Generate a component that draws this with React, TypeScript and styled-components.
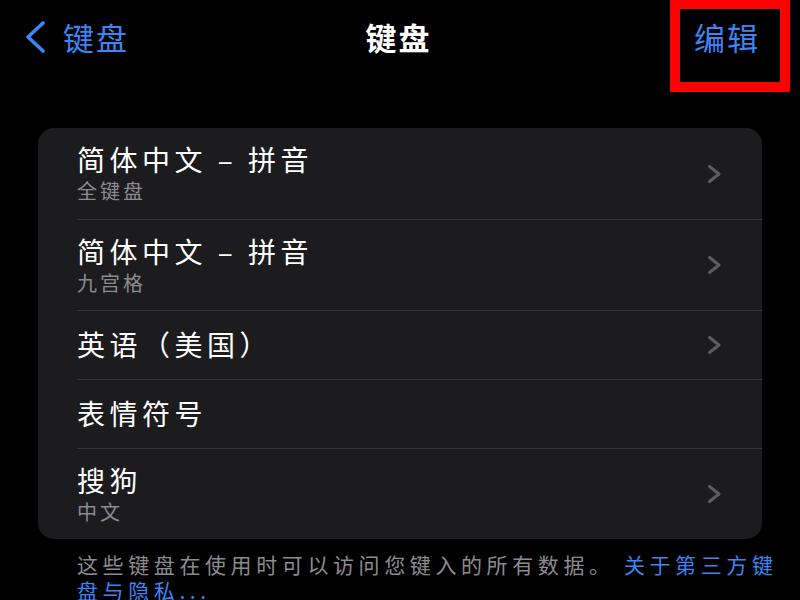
import React from "react";
import styled, { createGlobalStyle } from "styled-components";

const Blue = "#3b86f4";
const CardColor = "#1c1c1e";
const LineColor = "#38383a";
const SubColor = "#8b8b90";
const ChevronColor = "#5d5d61";

const GlobalStyle = createGlobalStyle`
  body {
    margin: 0;
    background: #000;
    font-family: "Noto Sans CJK SC", "Noto Sans", sans-serif;
  }
`;

const Screen = styled.div`
  position: relative;
  width: 800px;
  height: 600px;
  overflow: hidden;
  background: #000;
`;

const NavBar = styled.div`
  display: grid;
  grid-template-columns: 1fr auto 1fr;
  align-items: center;
  height: 74px;
  padding: 0 27px 0 24px;
`;

const NavText = styled.div`
  font-size: 31px;
  letter-spacing: 2px;
  line-height: 36px;
`;

const BackButton = styled(NavText)`
  display: flex;
  align-items: center;
  gap: 17px;
  color: ${Blue};
`;

const NavTitle = styled(NavText)`
  color: #fff;
  font-weight: 700;
`;

const EditButton = styled(NavText)`
  justify-self: end;
  margin-right: 13px;
  color: ${Blue};
`;

const Highlight = styled.div`
  position: absolute;
  left: 670px;
  top: -1px;
  width: 100px;
  height: 73px;
  border: 10px solid #ff0000;
`;

const Card = styled.div`
  margin: 54px 38px 0;
  background: ${CardColor};
  border-radius: 16px;
  overflow: hidden;
`;

const Row = styled.div<{ $tall?: boolean }>`
  display: flex;
  align-items: center;
  justify-content: space-between;
  margin-left: 39px;
  padding-right: 40px;
  height: ${(p) => (p.$tall ? "91px" : "69px")};
  box-sizing: border-box;

  & + & {
    border-top: 1px solid ${LineColor};
  }
`;

const RowText = styled.div`
  display: flex;
  flex-direction: column;
  padding-bottom: 2px;
`;

const RowTitle = styled.span`
  color: #fff;
  font-size: 28px;
  letter-spacing: 4.5px;
  line-height: 34px;
`;

const RowSub = styled.span`
  margin-top: 3px;
  color: ${SubColor};
  font-size: 20px;
  letter-spacing: 3px;
  line-height: 24px;
`;

const Footer = styled.div`
  padding: 12px 12px 0 77px;
  color: ${SubColor};
  font-size: 21px;
  letter-spacing: 4.6px;
  line-height: 26px;
`;

const Link = styled.span`
  color: ${Blue};
`;

const BackChevron = () => (
  <svg width="22" height="32" viewBox="0 0 22 32">
    <path
      d="M19 2 L4 16 L19 30"
      fill="none"
      stroke={Blue}
      strokeWidth="3.6"
      strokeLinecap="round"
      strokeLinejoin="round"
    />
  </svg>
);

const Chevron = () => (
  <svg width="15" height="20" viewBox="0 0 15 20">
    <path
      d="M2.5 2.5 L12 10 L2.5 17.5"
      fill="none"
      stroke={ChevronColor}
      strokeWidth="3"
      strokeLinecap="round"
      strokeLinejoin="round"
    />
  </svg>
);

interface Keyboard {
  title: string;
  sub?: string;
  arrow: boolean;
}

const keyboards: Keyboard[] = [
  { title: "简体中文 – 拼音", sub: "全键盘", arrow: true },
  { title: "简体中文 – 拼音", sub: "九宫格", arrow: true },
  { title: "英语（美国）", arrow: true },
  { title: "表情符号", arrow: false },
  { title: "搜狗", sub: "中文", arrow: true },
];

const App = () => {
  return (
    <Screen>
      <GlobalStyle />
      <NavBar>
        <BackButton>
          <BackChevron />
          键盘
        </BackButton>
        <NavTitle>键盘</NavTitle>
        <EditButton>编辑</EditButton>
      </NavBar>
      <Highlight />
      <Card>
        {keyboards.map((k, i) => (
          <Row key={i} $tall={!!k.sub}>
            <RowText>
              <RowTitle>{k.title}</RowTitle>
              {k.sub && <RowSub>{k.sub}</RowSub>}
            </RowText>
            {k.arrow && <Chevron />}
          </Row>
        ))}
      </Card>
      <Footer>
        这些键盘在使用时可以访问您键入的所有数据。{" "}
        <Link>关于第三方键盘与隐私...</Link>
      </Footer>
    </Screen>
  );
};

export default App;
